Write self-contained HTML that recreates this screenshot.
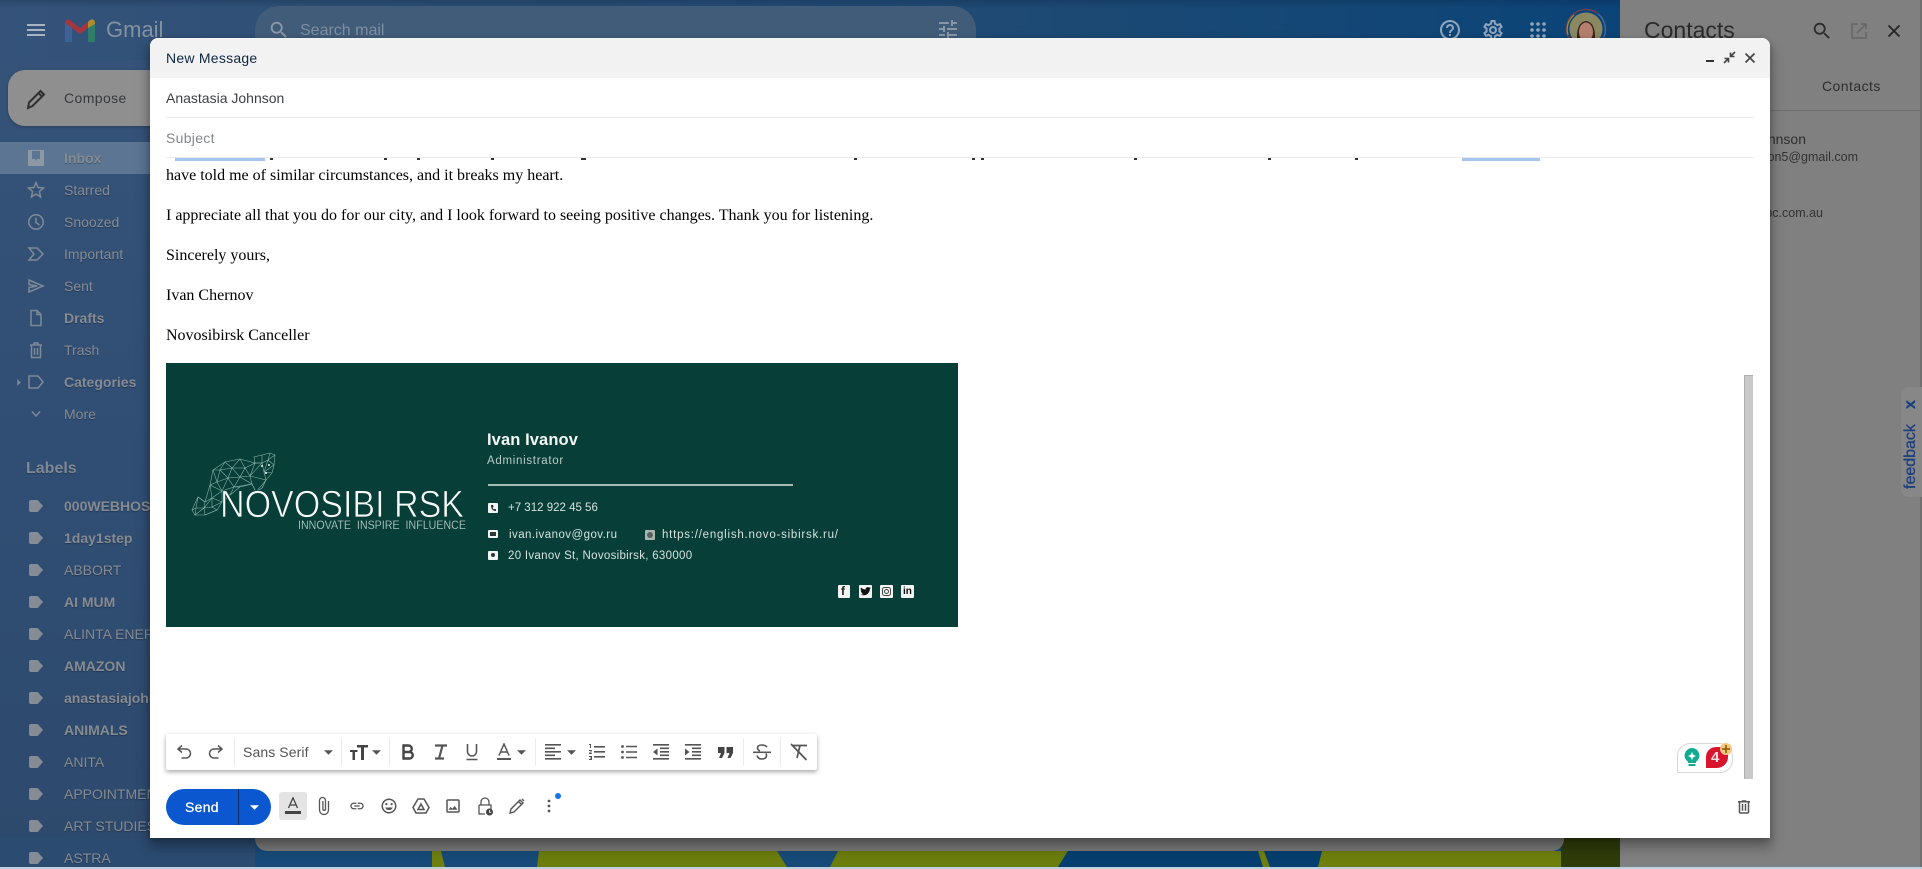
<!DOCTYPE html>
<html><head><meta charset="utf-8"><title>New Message</title>
<style>
html,body{margin:0;padding:0;width:1922px;height:869px;overflow:hidden;background:#2f4d72}
body{position:relative;font-family:"Liberation Sans",sans-serif;filter:blur(.3px)}
.a,svg{position:absolute}
.t{position:absolute;white-space:nowrap;line-height:20px;height:20px}
.s{font-size:14px;color:#868b92;text-shadow:0 1px 1px rgba(0,0,0,.28);left:64px}
.b{font-weight:bold}
.ic{fill:#7f8a97}
.lb{position:absolute;left:29px;width:14px;height:12px;background:#858c96;clip-path:polygon(0 10%,4% 0,62% 0,100% 50%,62% 100%,4% 100%,0 90%);border-radius:2px}
.m{font-family:"Liberation Serif",serif;font-size:16px;color:#000;left:166px}
.g{fill:#444}
.st{fill:none;stroke:#444;stroke-width:2}
.sep{position:absolute;top:738px;height:28px;width:1px;background:#ececec}
.sg{color:#d6e2de;font-size:11.5px;letter-spacing:.3px}
.w{position:absolute;background:#f2f5f3;border-radius:1px}
.f{position:absolute;width:3px;height:1.500px;top:158px;background:#333}
</style></head><body>

<!-- page background -->
<div class="a" style="left:0;top:0;width:1620px;height:60px;background:linear-gradient(90deg,#35537a 0,#2a4d74 30%,#1f4a73 60%,#0b4478 100%)"></div>
<div class="a" style="left:0;top:0;width:1620px;height:8px;background:linear-gradient(180deg,rgba(10,30,60,.25),rgba(0,0,0,0))"></div>
<div class="a" style="left:0;top:60px;width:255px;height:809px;background:linear-gradient(180deg,#355379 0,#304e74 50%,#2d496c 100%)"></div>
<svg style="left:0;top:838px" width="1620" height="31" viewBox="0 838 1620 31">
<rect x="0" y="838" width="1620" height="31" fill="#2b4b70"/>
<rect x="255" y="838" width="1365" height="31" fill="#174a78"/>
<polygon points="432,851 441,851 445,867 432,867" fill="#6f7f10"/>
<polygon points="539,851 777,851 787,867 537,867" fill="#6b7d0c"/>
<polygon points="838,851 1068,851 1058,867 830,867" fill="#6b7d0c"/>
<polygon points="1068,851 1260,851 1322,851 1322,867 1058,867" fill="#063f6f"/>
<polygon points="1258,851 1264,851 1270,867 1263,867" fill="#6f7f10"/>
<polygon points="1322,851 1561,851 1562,867 1318,867" fill="#6e7f0c"/>
<rect x="1561" y="838" width="59" height="29" fill="#2f3c0a"/>
</svg>
<div class="a" style="left:255px;top:830px;width:1309px;height:21px;background:#7a7a7a;border-radius:0 0 12px 12px"></div>
<div class="a" style="left:0;top:867px;width:1922px;height:2px;background:#bcd0df"></div>

<!-- top bar -->
<svg style="left:24px;top:18px;fill:#a8b4c2" width="24" height="24" viewBox="0 0 24 24"><path d="M3 18h18v-2H3v2zm0-5h18v-2H3v2zm0-7v2h18V6H3z"/></svg>
<svg style="left:65px;top:19px" width="30" height="23" viewBox="0 0 30 23">
<path d="M0 4 L0 21 Q0 23 2 23 L7 23 L7 9Z" fill="#3c6298"/>
<path d="M23 9 L23 23 L28 23 Q30 23 30 21 L30 4Z" fill="#2f7c68"/>
<path d="M0 4 Q1 -1 5 1 L15 9 L25 1 L23 9 L15 15 L0 4Z" fill="#a4363f"/>
<path d="M23 9 L23 3 Q26 -1 29 1 Q30 2 30 5Z" fill="#ab8e2f"/>
</svg>
<div class="t" style="left:106px;top:18px;font-size:22px;line-height:24px;height:24px;color:#85929f">Gmail</div>
<div class="a" style="left:255px;top:6px;width:721px;height:60px;border-radius:24px;background:#415c79"></div>
<svg style="left:268px;top:19px;fill:#8a99aa" width="22" height="22" viewBox="0 0 24 24"><path d="M15.5 14h-.79l-.28-.27C15.41 12.59 16 11.11 16 9.5 16 5.91 13.09 3 9.500 3S3 5.910 3 9.500 5.910 16 9.500 16c1.610 0 3.090-.59 4.230-1.570l.27.28v.79l5 4.990L20.490 19l-4.990-5zm-6 0C7.010 14 5 11.990 5 9.500S7.010 5 9.500 5 14 7.010 14 9.500 11.990 14 9.500 14z"/></svg>
<div class="t" style="left:300px;top:21px;font-size:16px;color:#7f8ea0">Search mail</div>
<svg style="left:936px;top:17px;fill:#8796a6" width="24" height="24" viewBox="0 0 24 24"><path d="M3 17v2h6v-2H3zM3 5v2h10V5H3zm10 16v-2h8v-2h-8v-2h-2v6h2zM7 9v2H3v2h4v2h2V9H7zm14 4v-2H11v2h10zm-6-4h2V7h4V5h-4V3h-2v6z"/></svg>
<svg style="left:1438px;top:18px;fill:#8fa6bd" width="24" height="24" viewBox="0 0 24 24"><path d="M11 18h2v-2h-2v2zm1-16C6.480 2 2 6.480 2 12s4.480 10 10 10 10-4.480 10-10S17.520 2 12 2zm0 18c-4.410 0-8-3.590-8-8s3.590-8 8-8 8 3.590 8 8-3.590 8-8 8zm0-14c-2.210 0-4 1.790-4 4h2c0-1.100.9-2 2-2s2 .9 2 2c0 2-3 1.750-3 5h2c0-2.250 3-2.500 3-5 0-2.210-1.790-4-4-4z"/></svg>
<svg style="left:1481px;top:18px;fill:#8fa6bd" width="24" height="24" viewBox="0 0 24 24"><path d="M19.43 12.98c.04-.32.07-.64.07-.98 0-.34-.03-.66-.07-.98l2.11-1.65c.19-.15.24-.42.12-.64l-2-3.46c-.09-.16-.26-.25-.44-.25-.06 0-.12.01-.17.03l-2.49 1c-.52-.4-1.08-.73-1.69-.98l-.38-2.65C14.46 2.18 14.25 2 14 2h-4c-.25 0-.46.18-.49.42l-.38 2.65c-.61.25-1.17.59-1.69.98l-2.49-1c-.06-.02-.12-.03-.18-.03-.17 0-.34.09-.43.25l-2 3.46c-.13.22-.07.49.12.64l2.11 1.65c-.04.32-.07.65-.07.98 0 .33.03.66.07.98l-2.11 1.65c-.19.15-.24.42-.12.64l2 3.46c.09.16.26.25.44.25.06 0 .12-.01.17-.03l2.49-1c.52.4 1.08.73 1.69.98l.38 2.65c.03.24.24.42.49.42h4c.25 0 .46-.18.49-.42l.38-2.65c.61-.25 1.17-.59 1.69-.98l2.49 1c.06.02.12.03.18.03.17 0 .34-.09.43-.25l2-3.46c.12-.22.07-.49-.12-.64l-2.11-1.65zm-1.98-1.71c.04.31.05.52.05.73 0 .21-.02.43-.05.73l-.14 1.13.89.7 1.08.84-.7 1.21-1.27-.51-1.04-.42-.9.68c-.43.32-.84.56-1.25.73l-1.06.43-.16 1.13-.2 1.35h-1.4l-.19-1.35-.16-1.13-1.06-.43c-.43-.18-.83-.41-1.23-.71l-.91-.7-1.06.43-1.27.51-.7-1.21 1.08-.84.89-.7-.14-1.13c-.03-.31-.05-.54-.05-.74s.02-.43.05-.73l.14-1.13-.89-.7-1.08-.84.7-1.21 1.27.51 1.04.42.9-.68c.43-.32.84-.56 1.25-.73l1.06-.43.16-1.13.2-1.35h1.39l.19 1.35.16 1.13 1.06.43c.43.18.83.41 1.23.71l.91.7 1.06-.43 1.27-.51.7 1.21-1.07.85-.89.7.14 1.13zM12 8c-2.210 0-4 1.790-4 4s1.790 4 4 4 4-1.790 4-4-1.790-4-4-4zm0 6c-1.100 0-2-.9-2-2s.9-2 2-2 2 .9 2 2-.9 2-2 2z"/></svg>
<svg style="left:1528px;top:20px;fill:#8fa6bd" width="20" height="20" viewBox="0 0 20 20"><circle cx="4" cy="4" r="1.800"/><circle cx="10" cy="4" r="1.800"/><circle cx="16" cy="4" r="1.800"/><circle cx="4" cy="10" r="1.800"/><circle cx="10" cy="10" r="1.800"/><circle cx="16" cy="10" r="1.800"/><circle cx="4" cy="16" r="1.800"/><circle cx="10" cy="16" r="1.800"/><circle cx="16" cy="16" r="1.800"/></svg>
<svg style="left:1564px;top:7px" width="44" height="44" viewBox="0 0 44 44">
<circle cx="22" cy="22" r="19.500" fill="none" stroke="#7a3f4a" stroke-width="1.300"/>
<path d="M4 28 A19 19 0 0 1 10 8" fill="none" stroke="#9a8a30" stroke-width="1.300"/>
<path d="M34 7 A20 20 0 0 1 40 30" fill="none" stroke="#3d6aa0" stroke-width="1.300"/>
<circle cx="22" cy="22" r="16.500" fill="#8a8860"/>
<path d="M13 34 Q12 15 22 14 Q32 15 31 34Z" fill="#3a2320"/>
<ellipse cx="22" cy="25" rx="7" ry="9.500" fill="#b47f6c"/>
</svg>

<!-- sidebar -->
<div class="a" style="left:8px;top:70px;width:170px;height:56px;background:#8f8f8f;border-radius:17px;box-shadow:0 1px 3px rgba(0,0,0,.25)"></div>
<svg style="left:24px;top:87px" width="24" height="24" viewBox="0 0 24 24"><path d="M4 21 L5 15.500 L16.500 4 L20 7.500 L8.500 19 Z M14.500 6 L18 9.500" fill="none" stroke="#2f2f2f" stroke-width="2"/></svg>
<div class="t" style="left:64px;top:88px;font-size:14px;color:#37393c;letter-spacing:.4px">Compose</div>
<div class="a" style="left:0;top:142px;width:180px;height:32px;background:#5b7593"></div>

<svg class="ic" style="left:27px;top:148px" width="18" height="20" viewBox="0 0 18 20"><path d="M1 2h16v16H1z M5 3v8h3l1 2 1-2h3V3z" fill-rule="evenodd" fill="#8d98a5"/></svg>
<div class="t s b" style="top:148px">Inbox</div>
<svg style="left:27px;top:180px;fill:none;stroke:#7f8a97;stroke-width:1.500" width="18" height="20" viewBox="0 0 18 20"><path d="M9 2.500l2.100 5 5.400.5-4.100 3.600 1.200 5.300L9 14l-4.600 2.900 1.200-5.300L1.500 8l5.400-.5z"/></svg>
<div class="t s" style="top:180px">Starred</div>
<svg style="left:27px;top:212px;fill:none;stroke:#7f8a97;stroke-width:1.500" width="18" height="20" viewBox="0 0 18 20"><circle cx="9" cy="10" r="7.200"/><path d="M9 5.500V10.500l3.500 2.500"/></svg>
<div class="t s" style="top:212px">Snoozed</div>
<svg style="left:27px;top:244px;fill:none;stroke:#7f8a97;stroke-width:1.500" width="18" height="20" viewBox="0 0 18 20"><path d="M2 4h8l6 6-6 6H2l5-6z"/></svg>
<div class="t s" style="top:244px">Important</div>
<svg style="left:27px;top:276px;fill:none;stroke:#7f8a97;stroke-width:1.500" width="18" height="20" viewBox="0 0 18 20"><path d="M2 4l14 6-14 6v-4.500l8-1.500-8-1.500z"/></svg>
<div class="t s" style="top:276px">Sent</div>
<svg style="left:27px;top:308px;fill:none;stroke:#7f8a97;stroke-width:1.500" width="18" height="20" viewBox="0 0 18 20"><path d="M4 2.500h6l4 4V17.500H4zM10 2.500v4h4"/></svg>
<div class="t s b" style="top:308px">Drafts</div>
<svg style="left:27px;top:340px;fill:none;stroke:#7f8a97;stroke-width:1.500" width="18" height="20" viewBox="0 0 18 20"><path d="M3 5h12M7 5V3h4v2M4.500 5v12.500h9V5M7.500 8v7M10.500 8v7"/></svg>
<div class="t s" style="top:340px">Trash</div>
<svg style="left:17px;top:379px;fill:#7f8a97" width="4" height="7" viewBox="0 0 5 10"><path d="M0 0l5 5-5 5z"/></svg>
<svg style="left:27px;top:372px;fill:none;stroke:#7f8a97;stroke-width:1.500" width="18" height="20" viewBox="0 0 18 20"><path d="M2 4h9l5 6-5 6H2z"/></svg>
<div class="t s b" style="top:372px">Categories</div>
<svg style="left:31px;top:409px;fill:none;stroke:#7f8a97;stroke-width:1.500" width="10" height="10" viewBox="0 0 10 10"><path d="M1 2.500l4 4.500 4-4.500"/></svg>
<div class="t s" style="top:404px">More</div>
<div class="t b" style="left:26px;top:457px;font-size:16px;line-height:24px;height:24px;color:#7f8893;text-shadow:0 1px 1px rgba(0,0,0,.25)">Labels</div>

<div class="lb" style="top:500px"></div><div class="t s b" style="top:496px">000WEBHOSTING</div>
<div class="lb" style="top:532px"></div><div class="t s b" style="top:528px">1day1step</div>
<div class="lb" style="top:564px"></div><div class="t s" style="top:560px">ABBORT</div>
<div class="lb" style="top:596px"></div><div class="t s b" style="top:592px">AI MUM</div>
<div class="lb" style="top:628px"></div><div class="t s" style="top:624px">ALINTA ENERGY</div>
<div class="lb" style="top:660px"></div><div class="t s b" style="top:656px">AMAZON</div>
<div class="lb" style="top:692px"></div><div class="t s b" style="top:688px">anastasiajohnson</div>
<div class="lb" style="top:724px"></div><div class="t s b" style="top:720px">ANIMALS</div>
<div class="lb" style="top:756px"></div><div class="t s" style="top:752px">ANITA</div>
<div class="lb" style="top:788px"></div><div class="t s" style="top:784px">APPOINTMENTS</div>
<div class="lb" style="top:820px"></div><div class="t s" style="top:816px">ART STUDIES</div>
<div class="lb" style="top:852px"></div><div class="t s" style="top:848px">ASTRA</div>

<!-- contacts panel -->
<div class="a" style="left:1620px;top:0;width:300px;height:867px;background:#808080"></div>
<div class="a" style="left:1920px;top:0;width:2px;height:867px;background:#6f6f6f"></div>
<div class="t" style="left:1644px;top:16px;font-size:23px;line-height:28px;height:28px;color:#2a2a2a">Contacts</div>
<svg style="left:1811px;top:20px;fill:#2c2c2c" width="22" height="22" viewBox="0 0 24 24"><path d="M15.500 14h-.79l-.28-.27C15.410 12.590 16 11.110 16 9.500 16 5.910 13.090 3 9.500 3S3 5.910 3 9.500 5.910 16 9.500 16c1.610 0 3.090-.59 4.230-1.570l.27.28v.79l5 4.990L20.490 19l-4.990-5zm-6 0C7.010 14 5 11.990 5 9.500S7.010 5 9.500 5 14 7.010 14 9.500 11.990 14 9.500 14z"/></svg>
<svg style="left:1850px;top:22px;fill:none;stroke:#666;stroke-width:1.500" width="18" height="18" viewBox="0 0 18 18"><path d="M8 2H2v14h14v-6M7 11L16 2M11 2h5v5"/></svg>
<svg style="left:1887px;top:24px;fill:none;stroke:#252525;stroke-width:1.800" width="14" height="14" viewBox="0 0 14 14"><path d="M1.500 1.500l11 11M12.500 1.500l-11 11"/></svg>
<div class="t" style="left:1822px;top:76px;font-size:14px;color:#2e2e2e;letter-spacing:.45px">Contacts</div>
<div class="a" style="left:1620px;top:110px;width:300px;height:1px;background:#6d6d6d"></div>
<div class="t" style="right:116px;top:129px;font-size:14px;color:#2e2e2e">Anastasia Johnson</div>
<div class="t" style="right:64px;top:147px;font-size:12.500px;color:#333">anastasiajohnson5@gmail.com</div>
<div class="t" style="right:99px;top:203px;font-size:12.500px;color:#333">anastasia@abc.com.au</div>
<div class="a" style="left:1901px;top:387px;width:21px;height:110px;background:#878787;border-radius:8px 0 0 8px"></div>
<div class="a" style="left:1901px;top:387px;width:19px;height:110px;writing-mode:vertical-rl;transform:rotate(180deg);font-size:16px;line-height:19px;color:#1d3f7c;white-space:nowrap;-webkit-text-stroke:.3px #1d3f7c"><span style="position:absolute;top:8px;left:0">feedback</span><span style="position:absolute;top:88px;left:0;font-weight:bold">x</span></div>

<!-- compose dialog -->
<div class="a" style="left:150px;top:38px;width:1620px;height:800px;background:#fff;border-radius:8px 8px 0 0;box-shadow:0 8px 12px 2px rgba(0,0,0,.28),0 2px 6px rgba(0,0,0,.2)"></div>
<div class="a" style="left:150px;top:38px;width:1620px;height:40px;background:#f2f2f2;border-radius:8px 8px 0 0"></div>
<div class="t" style="left:166px;top:48px;font-size:14px;color:#0f2740;letter-spacing:.25px">New Message</div>
<div class="a" style="left:1706px;top:60px;width:8px;height:2px;background:#333"></div>
<svg style="left:1723px;top:51px;fill:none;stroke:#444;stroke-width:1.600" width="13" height="13" viewBox="0 0 13 13"><path d="M1 12L5 8M1.500 7.500H5.500V11.500M12 1L8 5M7.500 1.500V5.500H11.500"/></svg>
<svg style="left:1745px;top:53px;fill:none;stroke:#444;stroke-width:1.700" width="10" height="10" viewBox="0 0 10 10"><path d="M.5.500l9 9M9.500.500l-9 9"/></svg>

<div class="t" style="left:166px;top:88px;font-size:14px;color:#3d3f42">Anastasia Johnson</div>
<div class="a" style="left:166px;top:117px;width:1588px;height:1px;background:#ececec"></div>
<div class="t" style="left:166px;top:128px;font-size:14px;color:#84878a;letter-spacing:.3px">Subject</div>
<div class="a" style="left:166px;top:157px;width:1588px;height:1px;background:#e8ecee"></div>
<div class="a" style="left:175px;top:158px;width:90px;height:3px;background:#a6c5f0"></div>
<div class="a" style="left:1462px;top:158px;width:78px;height:3px;background:#a6c5f0"></div>
<div class="f" style="left:270px"></div><div class="f" style="left:384px"></div><div class="f" style="left:417px"></div><div class="f" style="left:491px"></div><div class="f" style="left:581px;width:5px"></div><div class="f" style="left:854px"></div><div class="f" style="left:972px"></div><div class="f" style="left:981px"></div><div class="f" style="left:1134px"></div><div class="f" style="left:1268px"></div><div class="f" style="left:1355px"></div>

<div class="t m" style="top:166px">have told me of similar circumstances, and it breaks my heart.</div>
<div class="t m" style="top:206px">I appreciate all that you do for our city, and I look forward to seeing positive changes. Thank you for listening.</div>
<div class="t m" style="top:246px">Sincerely yours,</div>
<div class="t m" style="top:286px">Ivan Chernov</div>
<div class="t m" style="top:326px">Novosibirsk Canceller</div>

<!-- signature -->
<div class="a" style="left:166px;top:363px;width:792px;height:264px;background:#073e38"></div>
<svg style="left:0;top:0" width="1000" height="640" viewBox="0 0 1000 640">
<g fill="none" stroke="#9cc7ba" stroke-width=".55" opacity=".9">
<path d="M192 510L198 497L205 502L210 485L213 470L225 462L240 459L255 463L254 457L262 455L270 453L275 455L274 465L272 473L266 480L262 488L256 492L252 484L240 487L230 495L222 502L217 510L205 515L195 515Z"/>
<path d="M213 470L220 470L225 462L232 468L240 459L245 468L255 463L250 476L245 468L232 468L220 470L217 482L213 470M217 482L228 478L220 470M228 478L232 468L240 477L245 468M228 478L240 477L250 476M250 476L255 463L262 463L250 476L266 480M217 482L210 485L222 491L217 482M222 491L228 478L234 487L222 491L212 498L210 485M234 487L240 477L252 484L250 476M234 487L252 484M222 491L230 495L234 487M240 487L234 487M212 498L222 502L222 491M205 502L212 498L212 507L222 502M212 498L204 508L205 502L198 497L196 508L192 510M204 508L212 507L217 510L205 515L204 508L196 508L195 515L204 508"/>
<path d="M255 463L262 463L262 455M262 463L268 460L270 453M268 460L275 455M268 460L274 465L264 472L268 460M262 463L264 472L272 473M264 472L266 480M262 488L266 480L256 492L252 484"/>
</g>
<g fill="#e6f3ee"><circle cx="262" cy="466" r="1"/><circle cx="269" cy="465" r="1"/><circle cx="266" cy="473" r="1"/></g>
<text x="220" y="517" font-size="38.400" textLength="244" lengthAdjust="spacingAndGlyphs" fill="#f7faf9" stroke="#073e38" stroke-width=".8" paint-order="fill" font-family="Liberation Sans">NOVOSIBI RSK</text>
<text x="298" y="529" font-size="11.500" textLength="168" lengthAdjust="spacingAndGlyphs" fill="#c4d6d0" stroke="#073e38" stroke-width=".2" font-family="Liberation Sans" xml:space="preserve">INNOVATE  INSPIRE  INFLUENCE</text>
</svg>
<div class="t b" style="left:487px;top:430px;font-size:16.500px;color:#f4f7f6;letter-spacing:.1px">Ivan Ivanov</div>
<div class="t" style="left:487px;top:451px;font-size:11.500px;color:#b7ccc5;letter-spacing:.7px">Administrator</div>
<div class="a" style="left:488px;top:484px;width:305px;height:2px;background:#a8bdb6"></div>
<div class="w" style="left:488px;top:503px;width:10px;height:10px"></div>
<div class="t sg" style="left:508px;top:498px;letter-spacing:0">+7 312 922 45 56</div>
<div class="w" style="left:488px;top:530px;width:10px;height:8px"></div>
<div class="t sg" style="left:509px;top:525px;letter-spacing:.45px">ivan.ivanov@gov.ru</div>
<div class="w" style="left:645px;top:530px;width:10px;height:10px;background:#a8b5b1"></div>
<div class="a" style="left:647px;top:532px;width:6px;height:6px;border-radius:50%;background:#55635f"></div>
<div class="t sg" style="left:662px;top:525px;letter-spacing:.77px">https://english.novo-sibirsk.ru/</div>
<div class="w" style="left:488px;top:551px;width:10px;height:9px"></div>
<div class="t sg" style="left:508px;top:546px;letter-spacing:.3px">20 Ivanov St, Novosibirsk, 630000</div>
<div class="w" style="left:838px;top:585px;width:12px;height:13px"></div>
<div class="w" style="left:859px;top:585px;width:13px;height:13px"></div>
<div class="w" style="left:880px;top:585px;width:13px;height:13px"></div>
<div class="w" style="left:901px;top:585px;width:13px;height:13px"></div>
<div class="a" style="left:841px;top:584px;font:bold 12px/15px 'Liberation Sans',sans-serif;color:#222">f</div>
<svg style="left:860px;top:587px;fill:#111" width="11" height="9" viewBox="0 0 11 9"><path d="M0 7.500Q5 9.500 8 6.500Q10 4 9.800 2L11 .8 9.500 1 10.500 0 9 .5Q7 -.5 5.800 1.200 5.500 2 5.600 2.500 3 2.400 1 .5 0 2.500 1.600 3.800L.6 3.500Q.8 5 2.300 5.500H1.300Q2 7 3.600 7 2 8 0 7.500Z"/></svg>
<svg style="left:882px;top:587px;fill:none;stroke:#444;stroke-width:1" width="9" height="9" viewBox="0 0 9 9"><rect x=".5" y=".5" width="8" height="8" rx="2"/><circle cx="4.500" cy="4.500" r="2"/></svg>
<div class="a" style="left:903px;top:585px;font:bold 10px/14px 'Liberation Sans',sans-serif;color:#111">in</div>
<svg style="left:491px;top:505px;fill:#1a2a28" width="5" height="6" viewBox="0 0 5 6"><path d="M0 0h2l.5 2-1 .7q.5 1.200 1.500 1.800l.7-.7L5 4.500V6Q0 6 0 0z"/></svg>
<div class="a" style="left:490px;top:532px;width:6px;height:4px;background:#2a3a38"></div>
<div class="a" style="left:491px;top:553px;width:4px;height:4px;border-radius:50%;background:#2a3a38"></div>

<!-- scrollbar -->
<div class="a" style="left:1744px;top:375px;width:8px;height:403px;background:#c9c9c9;border-left:1px solid #b0b0b0;border-top:1px solid #b0b0b0"></div>

<!-- grammarly -->
<div class="a" style="left:1677px;top:743px;width:54px;height:28px;border:1px solid #d8d8d8;border-radius:13px 13px 13px 0/13px 13px 13px 0;background:#fff"></div>
<svg style="left:1684px;top:748px" width="16" height="20" viewBox="0 0 16 20"><path d="M8 0a7.500 7.500 0 0 0-4 13.800V15h8v-1.200A7.500 7.500 0 0 0 8 0z" fill="#10ab90"/><rect x="4.500" y="16" width="7" height="2" fill="#10ab90"/><path d="M8 4l1.300 2.700L12 8 9.300 9.300 8 12 6.700 9.300 4 8l2.700-1.300z" fill="#fff"/></svg>
<svg style="left:1706px;top:747px" width="23" height="22" viewBox="0 0 23 22"><path d="M10 0H22V10A11 11 0 0 1 11 21H0V10A10 10 0 0 1 10 0z" fill="#d9142f"/></svg>
<div class="a" style="left:1711px;top:749px;font:bold 15px/18px 'Liberation Sans',sans-serif;color:#f4dde0">4</div>
<div class="a" style="left:1720px;top:743px;width:12px;height:12px;border-radius:50%;background:#f6c77e"></div>
<svg style="left:1722px;top:745px;stroke:#8a5200;stroke-width:1.500" width="8" height="8" viewBox="0 0 8 8"><path d="M4 0v8M0 4h8"/></svg>

<!-- format toolbar -->
<div class="a" style="left:166px;top:734px;width:651px;height:36px;background:#fff;border-radius:2px;box-shadow:0 2px 5px rgba(0,0,0,.35)"></div>
<svg style="left:176px;top:744px" width="16" height="16" viewBox="0 0 16 16"><path d="M6 1.500L2 5l4 3.500M2.500 5H10a4.500 4.500 0 0 1 0 9H5.500" stroke="#555" stroke-width="1.500" fill="none"/></svg>
<svg style="left:208px;top:744px" width="16" height="16" viewBox="0 0 16 16"><path d="M10 1.500L14 5l-4 3.500M13.500 5H6a4.500 4.500 0 0 0 0 9h4.500" stroke="#555" stroke-width="1.500" fill="none"/></svg>
<div class="sep" style="left:234px"></div>
<div class="t" style="left:243px;top:742px;font-size:14px;color:#555;letter-spacing:.1px">Sans Serif</div>
<svg style="left:324px;top:750px;fill:#555" width="9" height="5" viewBox="0 0 10 5"><path d="M0 0h10L5 5z"/></svg>
<div class="sep" style="left:341px"></div>
<svg style="left:350px;top:744px;fill:#444" width="18" height="16" viewBox="0 0 18 16"><path d="M7 1h11v2.500h-4V16h-3V3.500H7zM0 6h7.500v2H5v8H2.500V8H0z"/></svg>
<svg style="left:372px;top:750px;fill:#555" width="9" height="5" viewBox="0 0 10 5"><path d="M0 0h10L5 5z"/></svg>
<div class="sep" style="left:389px"></div>
<svg style="left:401px;top:744px;fill:none;stroke:#444;stroke-width:2.400" width="14" height="16" viewBox="0 0 14 16"><path d="M2.500 1.500h5a3 3 0 0 1 0 6.500h-5zM2.500 8h6a3.200 3.200 0 0 1 0 6.500h-6z"/></svg>
<svg style="left:434px;top:744px" width="14" height="16" viewBox="0 0 14 16"><path d="M1 1.500h12M1 14.500h9M8.500 1.500L5 14.500" fill="none" stroke="#555" stroke-width="2.200"/></svg>
<svg style="left:465px;top:743px" width="14" height="18" viewBox="0 0 14 18"><path d="M2.500 1v7.500a4.500 4.500 0 0 0 9 0V1M1.500 16.500h11" fill="none" stroke="#555" stroke-width="1.600"/></svg>
<svg style="left:497px;top:743px" width="14" height="18" viewBox="0 0 14 18"><path d="M2 12.500L7 1l5 11.500M4 9h6" fill="none" stroke="#555" stroke-width="1.500"/><rect x="0" y="15" width="14" height="2" fill="#555"/></svg>
<svg style="left:517px;top:750px;fill:#555" width="9" height="5" viewBox="0 0 10 5"><path d="M0 0h10L5 5z"/></svg>
<div class="sep" style="left:535px"></div>
<svg style="left:545px;top:744px;fill:#555" width="16" height="16" viewBox="0 0 16 16"><path d="M0 0h16v1.600H0zM0 3.500h10v1.600H0zM0 7h16v1.600H0zM0 10.500h10v1.600H0zM0 14h16v1.600H0z"/></svg>
<svg style="left:567px;top:750px;fill:#555" width="9" height="5" viewBox="0 0 10 5"><path d="M0 0h10L5 5z"/></svg>
<svg style="left:589px;top:744px;fill:#555" width="16" height="16" viewBox="0 0 16 16"><path d="M5 2h11v1.600H5zM5 7h11v1.600H5zM5 12h11v1.600H5zM0 0h2v4H1V1H0zM0 6h3v1L1 8.800h2V10H0V9l2-2H0zM0 12h3v4H0v-1h2v-.5H1v-1h1V13H0z"/></svg>
<svg style="left:621px;top:744px;fill:#555" width="16" height="16" viewBox="0 0 16 16"><circle cx="1.500" cy="2.500" r="1.400"/><circle cx="1.500" cy="8" r="1.400"/><circle cx="1.500" cy="13.500" r="1.400"/><path d="M5 1.700h11v1.600H5zM5 7.200h11v1.600H5zM5 12.700h11v1.600H5z"/></svg>
<svg style="left:653px;top:744px;fill:#555" width="16" height="16" viewBox="0 0 16 16"><path d="M0 0h16v1.600H0zM0 14h16v1.600H0zM7 3.500h9v1.600H7zM7 7h9v1.600H7zM7 10.500h9v1.600H7zM4.500 4.500v7L0 8z"/></svg>
<svg style="left:685px;top:744px;fill:#555" width="16" height="16" viewBox="0 0 16 16"><path d="M0 0h16v1.600H0zM0 14h16v1.600H0zM7 3.500h9v1.600H7zM7 7h9v1.600H7zM7 10.500h9v1.600H7zM0 4.500v7L4.500 8z"/></svg>
<svg style="left:718px;top:747px;fill:#444" width="15" height="11" viewBox="0 0 15 11"><path d="M0 0h6.500v6L4 11H1l2-5H0zM8.500 0H15v6l-2.500 5h-3l2-5h-3z"/></svg>
<div class="sep" style="left:743px"></div>
<svg style="left:753px;top:744px" width="18" height="16" viewBox="0 0 18 16"><path d="M14 3Q12 1 9 1 4.500 1 4.500 4q0 2 2.500 3M4 11.500Q5 15 9 15q4.500 0 4.500-3.500 0-1-.5-2" fill="none" stroke="#555" stroke-width="1.600"/><rect x="0" y="7.500" width="18" height="1.600" fill="#555"/></svg>
<div class="sep" style="left:780px"></div>
<svg style="left:790px;top:743px" width="18" height="18" viewBox="0 0 18 18"><path d="M3 2.500h14M10 2.500L7 15M1 1l15.500 16" fill="none" stroke="#555" stroke-width="1.700"/></svg>

<!-- bottom bar -->
<div class="a" style="left:166px;top:789px;width:105px;height:36px;background:#0b57cf;border-radius:18px"></div>
<div class="a" style="left:238px;top:789px;width:1px;height:36px;background:#0a2e6e"></div>
<div class="t" style="left:185px;top:797px;font-size:14px;color:#fff;letter-spacing:.3px;-webkit-text-stroke:.25px #fff">Send</div>
<svg style="left:250px;top:805px;fill:#fff" width="9" height="5" viewBox="0 0 10 5"><path d="M0 0h10L5 5z"/></svg>
<div class="a" style="left:279px;top:792px;width:28px;height:28px;background:#e4e4e4;border-radius:3px"></div>
<svg style="left:285px;top:797px" width="16" height="18" viewBox="0 0 16 18"><path d="M3.500 11L8 .8 12.500 11M5 8h6" fill="none" stroke="#444" stroke-width="1.300"/><rect x="0" y="14" width="16" height="3" fill="#444"/></svg>
<svg style="left:316px;top:796px;fill:none;stroke:#555;stroke-width:1.300" width="16" height="20" viewBox="0 0 16 20"><path d="M12.500 5v9a4.500 4.500 0 0 1-9 0V4.500a3 3 0 0 1 6 0V13a1.300 1.300 0 0 1-2.600 0V5"/></svg>
<svg style="left:349px;top:798px;fill:#555" width="16" height="16" viewBox="0 0 24 24"><path d="M3.900 12c0-1.710 1.390-3.100 3.100-3.100h4V7H7c-2.760 0-5 2.240-5 5s2.240 5 5 5h4v-1.900H7c-1.710 0-3.100-1.390-3.100-3.100zM8 13h8v-2H8v2zm9-6h-4v1.900h4c1.710 0 3.100 1.390 3.100 3.100s-1.390 3.100-3.100 3.100h-4V17h4c2.760 0 5-2.240 5-5s-2.240-5-5-5z"/></svg>
<svg style="left:380px;top:797px;fill:#555" width="18" height="18" viewBox="0 0 24 24"><path d="M15.500 11a1.500 1.500 0 1 0 0-3 1.500 1.500 0 0 0 0 3zm-7 0a1.500 1.500 0 1 0 0-3 1.500 1.500 0 0 0 0 3zm3.490-9C6.470 2 2 6.480 2 12s4.470 10 9.990 10C17.520 22 22 17.520 22 12S17.520 2 11.990 2zM12 20c-4.420 0-8-3.580-8-8s3.580-8 8-8 8 3.580 8 8-3.580 8-8 8zm0-2.500c2.330 0 4.310-1.460 5.110-3.500H6.890c.8 2.040 2.780 3.500 5.110 3.500z"/></svg>
<svg style="left:412px;top:797px" width="18" height="18" viewBox="0 0 18 18"><path d="M6 2h6l5 8.500-3 5.500H4L1 10.500zM9 7l-3 5.500h6z" fill="none" stroke="#555" stroke-width="1.500"/></svg>
<svg style="left:444px;top:797px;fill:#555" width="18" height="18" viewBox="0 0 24 24"><path d="M19 5v14H5V5h14m0-2H5c-1.100 0-2 .9-2 2v14c0 1.100.9 2 2 2h14c1.100 0 2-.9 2-2V5c0-1.100-.9-2-2-2zm-4.860 8.860l-3 3.870L9 13.140 6 17h12l-3.860-5.140z"/></svg>
<svg style="left:478px;top:797px" width="16" height="20" viewBox="0 0 16 20"><path d="M3 8V5a4 4 0 0 1 8 0v3M1 8h12v4M7 17H1V8" fill="none" stroke="#555" stroke-width="1.300"/><circle cx="11.500" cy="15" r="3.500" fill="#444"/><path d="M11.500 13v2.300h1.500" stroke="#fff" fill="none" stroke-width=".8"/></svg>
<svg style="left:509px;top:798px" width="16" height="16" viewBox="0 0 16 16"><path d="M1 15l1-4L11 2l3 3-9 9zM9.500 3.500l3 3M13 1l2 2" fill="none" stroke="#555" stroke-width="1.400"/></svg>
<svg style="left:547px;top:799px;fill:#555" width="4" height="14" viewBox="0 0 4 14"><circle cx="2" cy="2" r="1.400"/><circle cx="2" cy="7" r="1.400"/><circle cx="2" cy="12" r="1.400"/></svg>
<div class="a" style="left:555px;top:793px;width:6px;height:6px;border-radius:50%;background:#1a73e8"></div>
<svg style="left:1735px;top:798px;fill:#555" width="18" height="18" viewBox="0 0 24 24"><path d="M15 4V3H9v1H4v2h1v13c0 1.100.9 2 2 2h10c1.100 0 2-.9 2-2V6h1V4h-5zm2 15H7V6h10v13zM9 8h2v9H9zm4 0h2v9h-2z"/></svg>

</body></html>
